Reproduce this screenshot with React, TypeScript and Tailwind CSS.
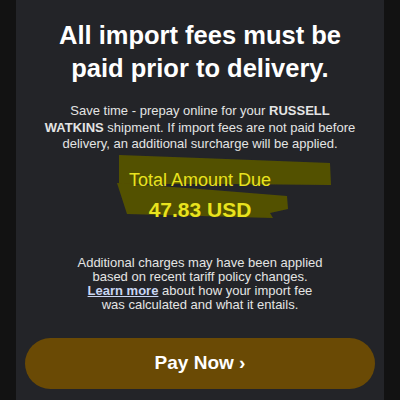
import React from 'react'

function Highlight() {
  // two marker strokes sitting behind the amount block
  return (
    <svg
      className="pointer-events-none absolute left-[-16px] top-[-12px]"
      width="400"
      height="90"
      viewBox="0 140 400 90"
      aria-hidden
    >
      <defs>
        <filter id="marker-soft">
          <feGaussianBlur stdDeviation="0.7" />
        </filter>
      </defs>
      <g fill="#535100" filter="url(#marker-soft)">
        <path d="M119 154 L200 157 L330 162 L331 184 L230 183 L119 183 Z" />
        <path d="M117 182 L200 188 L287 195 L288 208 L270 212 L273 217 L127 213 Z" />
      </g>
    </svg>
  )
}

export default function App() {
  return (
    <div className="flex h-[400px] w-[400px] bg-[#121212] font-['Liberation_Sans',Arial,sans-serif]">
      <main className="mx-4 flex flex-1 flex-col items-center bg-[#232428] pt-[19px] text-center">
        <h1 className="text-[25.5px] font-bold leading-[33px] text-white">
          All import fees must be
          <br />
          paid prior to delivery.
        </h1>
        <p className="mt-[18px] text-[13px] leading-[16.5px] text-[#e4e4e4]">
          Save time - prepay online for your <b>RUSSELL</b>
          <br />
          <b>WATKINS</b> shipment. If import fees are not paid before
          <br />
          delivery, an additional surcharge will be applied.
        </p>
        <div className="relative h-[76px] self-stretch">
          <Highlight />
          <div className="relative flex flex-col items-center pt-[16px] text-[#e9e31e]">
            <span className="text-[18px] leading-[22px]">Total Amount Due</span>
            <span className="mt-[7px] text-[21px] font-bold leading-[24px]">47.83 USD</span>
          </div>
        </div>
        <p className="mt-[27px] text-[13px] leading-[14px] text-[#e4e4e4]">
          Additional charges may have been applied
          <br />
          based on recent tariff policy changes.
          <br />
          <a className="font-bold text-[#c9d6f2] underline" href="#">
            Learn more
          </a>{' '}
          about how your import fee
          <br />
          was calculated and what it entails.
        </p>
        <button
          type="button"
          className="mt-[26px] flex h-[51px] w-[350px] items-center justify-center rounded-full bg-[#6a4a05] text-[19px] font-bold text-white"
        >
          Pay Now ›
        </button>
      </main>
    </div>
  )
}
